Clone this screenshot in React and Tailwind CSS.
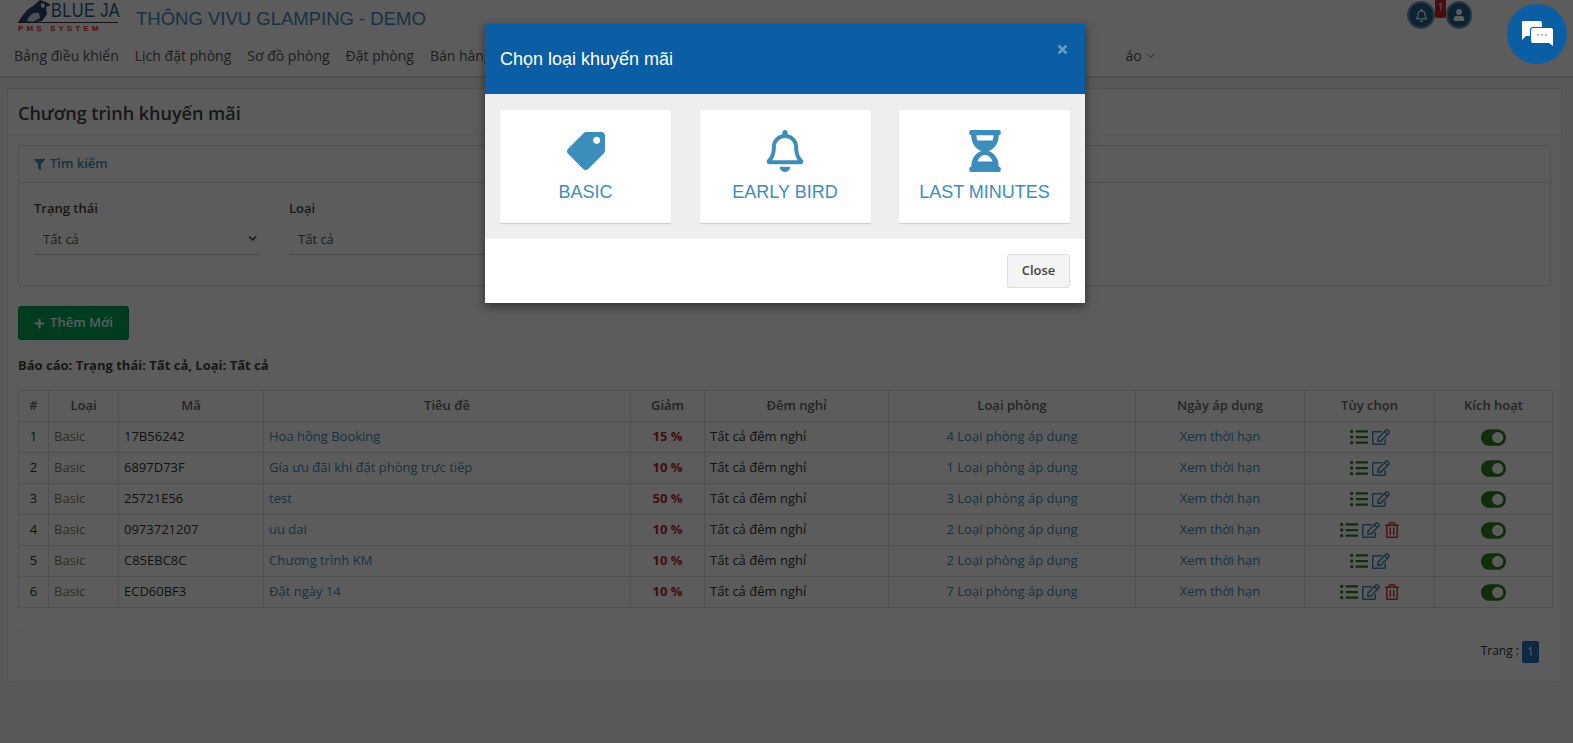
import React from "react";
import { FaTag, FaRegBell, FaHourglassHalf, FaUser, FaFilter, FaPlus, FaListUl, FaRegEdit, FaRegTrashAlt, FaToggleOn, FaTimes, FaChevronDown } from "react-icons/fa";
import { ChevronDown } from "lucide-react";

const rows = [
  ["1", "17B56242", "Hoa hồng Booking", "15 %", "4", false],
  ["2", "6897D73F", "Gía ưu đãi khi đặt phòng trực tiếp", "10 %", "1", false],
  ["3", "25721E56", "test", "50 %", "3", false],
  ["4", "0973721207", "uu dai", "10 %", "2", true],
  ["5", "C85EBC8C", "Chương trình KM", "10 %", "2", false],
  ["6", "ECD60BF3", "Đặt ngày 14", "10 %", "7", true],
];
const navItems = ["Bảng điều khiển", "Lịch đặt phòng", "Sơ đồ phòng", "Đặt phòng", "Bán hàng"];
const heads = ["#", "Loại", "Mã", "Tiêu đề", "Giảm", "Đêm nghỉ", "Loại phòng", "Ngày áp dụng", "Tùy chọn", "Kích hoạt"];
const th = "border border-[#dddddd] font-semibold text-[#666] text-center px-[5px] py-0 h-[31px]";
const td = "border border-[#dddddd] px-[5px] py-0 h-[31px]";

function Logo() {
  return (
    <div className="relative w-[102px] h-[33px] shrink-0 overflow-hidden">
      <svg className="absolute left-0 top-0" width="34" height="24" viewBox="0 0 34 24">
        <path d="M0 23 C4 15 9 9 15 6 L22 0 L28 2 L33 5 L28 7 L29 14 L24 21 L12 23 Z" fill="#26456b" />
        <path d="M9 21 C12 13 17 12 21 13 L22 18 L15 22 Z" fill="#cfd8e6" />
        <path d="M23 3 L27 4 L26 8 L23 7 Z" fill="#e8edf3" />
      </svg>
      <div className="absolute left-[33px] top-[-3px] text-[21px] leading-[26px] tracking-[0.5px] text-[#1f5e8e] font-['Liberation_Sans',sans-serif] origin-left scale-x-[0.78] whitespace-nowrap">BLUE JAY</div>
      <div className="absolute left-0 top-[22px] w-[100px] h-px bg-[#333]" />
      <div className="absolute left-0 top-[24px] text-[8px] leading-[9px] tracking-[3.1px] text-[#d33] font-bold font-['Liberation_Sans',sans-serif] whitespace-nowrap">PMS SYSTEM</div>
    </div>
  );
}

function PromoCard({ icon, label }) {
  return (
    <div className="w-[171px] h-[113px] bg-white rounded-[2px] shadow-[0_1px_1px_rgba(0,0,0,0.15)] flex flex-col items-center pt-[20px] text-[#3c8dbc]">
      <div className="h-[42px] flex items-center justify-center">{icon}</div>
      <div className="mt-[8px] text-[18px] leading-[24px] font-['Liberation_Sans',sans-serif]">{label}</div>
    </div>
  );
}

export default function App() {
  return (
    <div className="relative w-full h-[743px] overflow-hidden bg-[#f4f4f4] text-[#333] text-[13px] font-['Open_Sans','Noto_Sans',sans-serif]">
      <header className="h-[78px] bg-white border-b-2 border-[#d8d8d8]">
        <div className="h-[42px] flex items-start pl-[18px]">
          <Logo />
          <div className="ml-[16px] mt-[7px] text-[18.5px] leading-[23px] text-[#3c8dbc] font-['Liberation_Sans',sans-serif] whitespace-nowrap">THÔNG VIVU GLAMPING - DEMO</div>
          <div className="ml-auto mr-[101px] flex items-start">
            <div className="mt-px w-[28px] h-[28px] rounded-full bg-[#23618f] border-2 border-[#7d9db5] flex items-center justify-center text-white text-[13px]"><FaRegBell /></div>
            <div className="w-[11px] h-[18px] bg-[#cc2222] text-white text-[10px] leading-[14px] text-center rounded-b-[2px]">1</div>
            <div className="mt-px w-[26px] h-[28px] rounded-full bg-[#23618f] border-2 border-[#7d9db5] flex items-center justify-center text-white text-[12px]"><FaUser /></div>
          </div>
        </div>
        <nav className="flex pl-[14px] gap-[16px] text-[14px] leading-[28px] text-[#555] whitespace-nowrap">
          {navItems.map((n) => <span key={n}>{n}</span>)}
          <span className="ml-[618px] flex items-center gap-[3px]">áo <ChevronDown size={12} /></span>
        </nav>
      </header>

      <main className="mx-[7px] mt-[10px] w-[1555px] h-[594px] bg-white border border-[#e4e4e4] rounded-[3px]">
        <h1 className="h-[46px] pl-[10px] pt-[10px] border-b border-[#eeeeee] text-[18px] leading-[28px] font-semibold text-[#444]">Chương trình khuyến mãi</h1>

        <section className="mx-[10px] mt-[10px] h-[141px] border border-[#dddddd] rounded-[3px]">
          <div className="h-[37px] pl-[15px] flex items-center gap-[5px] border-b border-[#dddddd] font-semibold text-[#3c8dbc]"><FaFilter className="text-[11px]" />Tìm kiếm</div>
          <div className="pl-[15px] pt-[16px] flex gap-[29px]">
            <div className="w-[226px]">
              <div className="font-semibold leading-[18px] text-[#444]">Trạng thái</div>
              <div className="mt-[8px] h-[30px] border-b border-[#cccccc] pl-[9px] flex items-center justify-between pr-[3px] text-[#555]">Tất cả <FaChevronDown className="text-[9px] text-[#333] mb-[3px]" /></div>
            </div>
            <div className="w-[226px]">
              <div className="font-semibold leading-[18px] text-[#444]">Loại</div>
              <div className="mt-[8px] h-[30px] border-b border-[#cccccc] pl-[9px] flex items-center text-[#555]">Tất cả</div>
            </div>
          </div>
        </section>

        <button className="ml-[10px] mt-[20px] w-[111px] h-[34px] rounded-[3px] bg-[#00a65a] text-white font-semibold flex items-center justify-center gap-[5px] border border-[#008d4c]"><FaPlus className="text-[11px]" />Thêm Mới</button>

        <p className="ml-[10px] mt-[16px] leading-[18px] font-bold text-[#444]">Báo cáo: Trạng thái: Tất cả, Loại: Tất cả</p>

        <table className="ml-[10px] mt-[16px] w-[1534px] table-fixed border-collapse">
          <colgroup>
            <col className="w-[30px]" />
            <col className="w-[70px]" />
            <col className="w-[145px]" />
            <col className="w-[367px]" />
            <col className="w-[74px]" />
            <col className="w-[184px]" />
            <col className="w-[247px]" />
            <col className="w-[169px]" />
            <col className="w-[130px]" />
            <col className="w-[118px]" />
          </colgroup>
          <thead>
            <tr>{heads.map((h) => <th key={h} className={th}>{h}</th>)}</tr>
          </thead>
          <tbody>
            {rows.map((r) => (
              <tr key={r[0]}>
                <td className={td + " text-center"}>{r[0]}</td>
                <td className={td + " text-[#8a7a55]"}>Basic</td>
                <td className={td}>{r[1]}</td>
                <td className={td + " text-[#3c8dbc]"}>{r[2]}</td>
                <td className={td + " text-center font-bold text-[#b8282e]"}>{r[3]}</td>
                <td className={td}>Tất cả đêm nghỉ</td>
                <td className={td + " text-center text-[#3c8dbc]"}>{r[4]} Loại phòng áp dụng</td>
                <td className={td + " text-center text-[#3c8dbc]"}>Xem thời hạn</td>
                <td className={td}>
                  <div className="flex items-center justify-center gap-[4px] text-[18px]">
                    <FaListUl className="text-[#2f7d1f]" />
                    <FaRegEdit className="text-[#3c8dbc]" />
                    {r[5] && <FaRegTrashAlt className="text-[#d9363e] text-[16px]" />}
                  </div>
                </td>
                <td className={td}>
                  <div className="flex justify-center"><FaToggleOn className="text-[#2f7d1f] text-[25px]" /></div>
                </td>
              </tr>
            ))}
          </tbody>
        </table>

        <div className="ml-[10px] mt-[21px] w-[1534px] border-t border-[#eeeeee] pt-[11px] pr-[13px] flex justify-end items-start gap-[3px]">
          <span className="text-[12px] leading-[20px]">Trang :</span>
          <span className="w-[17px] h-[22px] bg-[#2c6fbb] rounded-[2px] text-white text-[12px] leading-[22px] text-center">1</span>
        </div>
      </main>

      <div className="absolute inset-0 bg-black/[.64]" />

      <div className="absolute left-[485px] top-[24px] w-[600px] bg-white shadow-[0_3px_9px_rgba(0,0,0,0.5)]">
        <div className="relative h-[70px] bg-[#0b5ea3] flex items-center pl-[15px] text-white text-[18px] font-['Liberation_Sans',sans-serif]">
          Chọn loại khuyến mãi
          <FaTimes className="absolute right-[16px] top-[19px] text-[13px] text-[#6c9fc8]" />
        </div>
        <div className="h-[145px] bg-[#eeeeee] flex justify-between px-[15px] pt-[16px]">
          <PromoCard label="BASIC" icon={<FaTag className="text-[38px] scale-x-[-1]" />} />
          <PromoCard label="EARLY BIRD" icon={<FaRegBell className="text-[42px]" />} />
          <PromoCard label="LAST MINUTES" icon={<FaHourglassHalf className="text-[42px]" />} />
        </div>
        <div className="h-[64px] flex items-start justify-end pt-[15px] pr-[15px]">
          <button className="w-[63px] h-[34px] bg-[#f4f4f4] border border-[#dddddd] rounded-[3px] text-[#444] font-semibold">Close</button>
        </div>
      </div>

      <div className="absolute left-[1507px] top-[4px] w-[60px] h-[60px] rounded-full bg-[#0b5ea3] flex items-center justify-center">
        <svg width="34" height="30" viewBox="0 0 34 30">
          <path d="M3 2 H20 a2 2 0 0 1 2 2 V8 H13 a3 3 0 0 0 -3 3 V17 H6 L2 21 V3 a1 1 0 0 1 1 -1 Z" fill="#fff" />
          <path d="M13 9 H31 a2 2 0 0 1 2 2 V27 L29 24 H13 a2 2 0 0 1 -2 -2 V11 a2 2 0 0 1 2 -2 Z" fill="#fff" />
          <circle cx="18" cy="16" r="1" fill="#7fb0d8" /><circle cx="22" cy="16" r="1" fill="#7fb0d8" /><circle cx="26" cy="16" r="1" fill="#7fb0d8" />
        </svg>
      </div>
    </div>
  );
}
